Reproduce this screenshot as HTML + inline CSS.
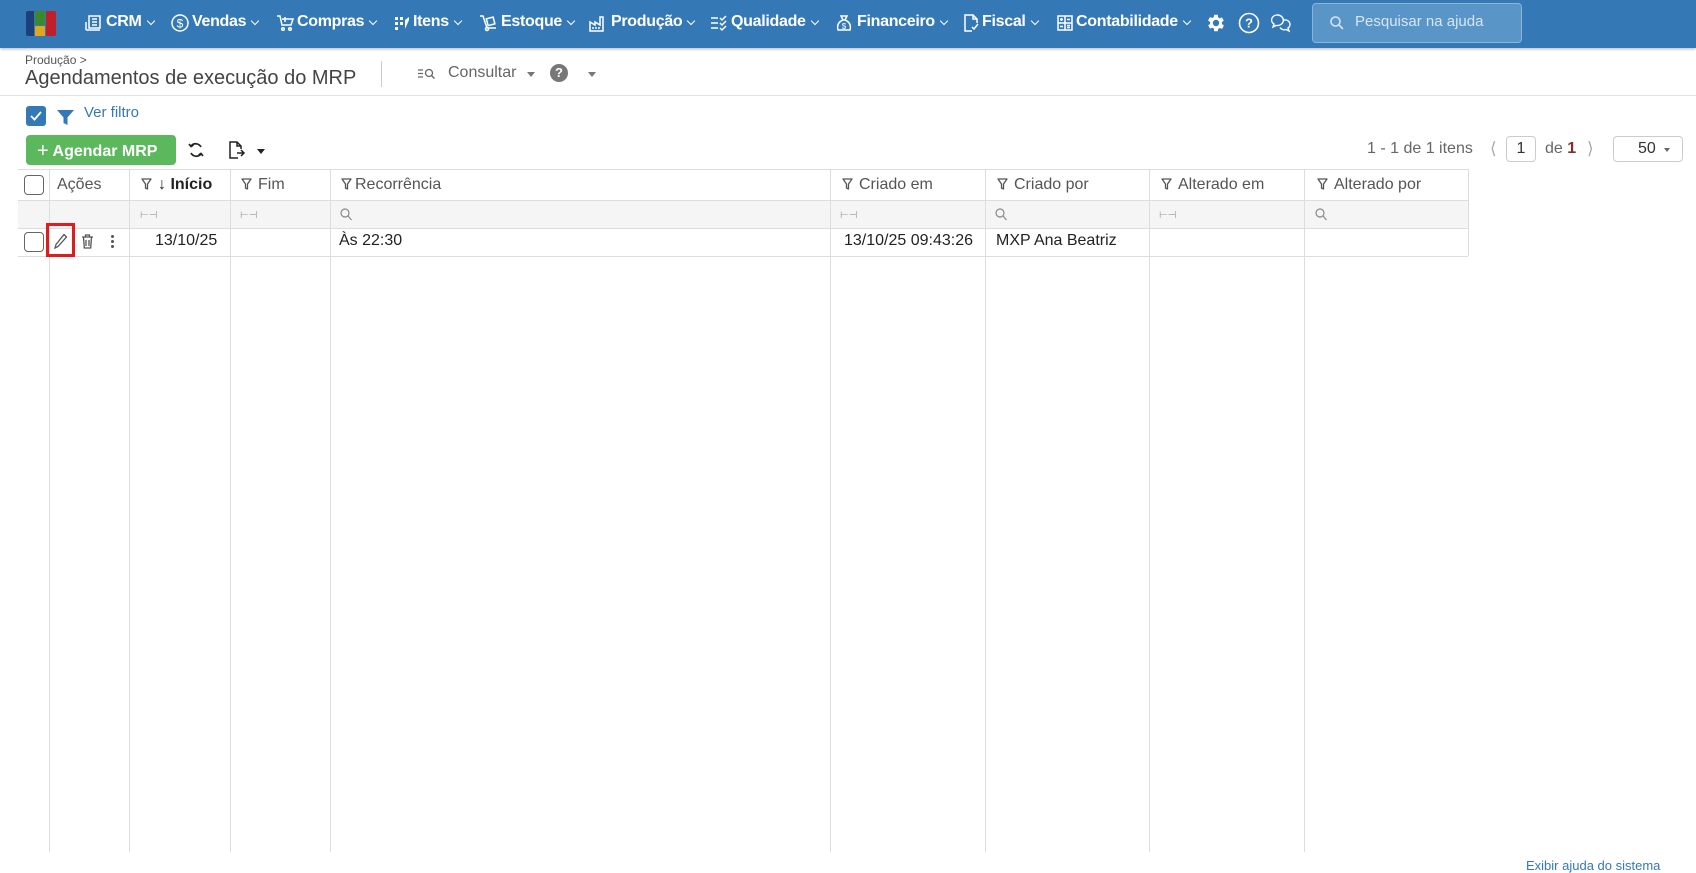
<!DOCTYPE html>
<html><head><meta charset="utf-8"><style>
*{box-sizing:border-box;margin:0;padding:0}
body{width:1696px;height:865px;overflow:hidden;background:#fff;font-family:"Liberation Sans",sans-serif;position:relative;color:#333}
.a{position:absolute;white-space:nowrap}
#top{position:absolute;left:0;top:0;width:1696px;height:48px;background:#3479b6;box-shadow:0 1px 3px rgba(0,0,0,.3)}
.nav{position:absolute;top:13px;color:#fff;font-size:16px;font-weight:bold;letter-spacing:-.3px}
.ico{position:absolute;top:14px}
.chev{display:inline-block;width:6px;height:6px;border-right:1.5px solid #fff;border-bottom:1.5px solid #fff;transform:rotate(45deg);margin-left:6px;position:relative;top:-2px}
.th{position:absolute;top:176px;font-size:16px;color:#555}
.vl{position:absolute;top:169px;width:1px;height:683px;background:#ddd}
.hl{position:absolute;height:1px;background:#ddd}
.fi{position:absolute;top:210px;color:#999;font-size:10px}
.td{position:absolute;top:232px;font-size:16px;color:#222}
.filt{display:inline-block;width:11px;height:12px;margin-right:6px;position:relative;top:1px}
</style></head><body>
<svg width="0" height="0" style="position:absolute"><defs><symbol id="fu" viewBox="0 0 11 12"><path d="M1 1h9L6.5 6v5L4.5 10V6z" fill="none" stroke="#555" stroke-width="1.3" stroke-linejoin="round"/></symbol></defs></svg>
<div id="top">
 <div class="a" style="left:26px;top:11px;width:8px;height:25px;background:#1d3f7a;border-radius:2px 0 0 2px"></div>
 <div class="a" style="left:35px;top:11px;width:10px;height:14px;background:#3a8a2a"></div>
 <div class="a" style="left:35px;top:26px;width:10px;height:10px;background:#e0a61e"></div>
 <div class="a" style="left:46px;top:11px;width:10px;height:25px;background:#c0202a;border-radius:0 2px 2px 0"></div>
 <svg class="ico" style="left:84px" width="18" height="18" viewBox="0 0 18 18" fill="none" stroke="#fff" stroke-width="1.5"><rect x="5" y="2" width="11" height="12"/><path d="M2 16h14M2 8v8M8 5h5M8 8h5M8 11h5"/></svg>
 <div class="nav" style="left:106px">CRM<span class="chev"></span></div>
 <svg class="ico" style="left:171px" width="18" height="18" viewBox="0 0 18 18" fill="none" stroke="#fff" stroke-width="1.5"><circle cx="9" cy="9" r="8"/><text x="9" y="13.5" fill="#fff" stroke="none" font-size="12" text-anchor="middle" font-family="Liberation Sans">$</text></svg>
 <div class="nav" style="left:192px">Vendas<span class="chev"></span></div>
 <svg class="ico" style="left:276px" width="18" height="18" viewBox="0 0 18 18" fill="none" stroke="#fff" stroke-width="1.5"><path d="M1 2h3l2 9h9l2-6H6M9 3v5M7 5h4"/><circle cx="7" cy="15" r="1.3"/><circle cx="14" cy="15" r="1.3"/></svg>
 <div class="nav" style="left:297px">Compras<span class="chev"></span></div>
 <svg class="ico" style="left:393px" width="18" height="18" viewBox="0 0 18 18" fill="#fff"><rect x="2" y="3" width="3" height="3"/><rect x="7" y="3" width="3" height="3"/><rect x="2" y="8" width="3" height="3"/><rect x="7" y="8" width="3" height="3"/><rect x="2" y="13" width="3" height="3"/><path d="M12 6l4-3v3l-4 9z"/></svg>
 <div class="nav" style="left:413px">Itens<span class="chev"></span></div>
 <svg class="ico" style="left:479px" width="18" height="18" viewBox="0 0 18 18" fill="none" stroke="#fff" stroke-width="1.5"><path d="M1 2h3l4 12h9"/><rect x="8" y="4" width="7" height="7" transform="rotate(-15 11 7)"/><circle cx="8" cy="15" r="1.5"/></svg>
 <div class="nav" style="left:501px">Estoque<span class="chev"></span></div>
 <svg class="ico" style="left:589px" width="18" height="18" viewBox="0 0 18 18" fill="none" stroke="#fff" stroke-width="1.5"><path d="M1 17V8l5 3V8l5 3V3h3v14zM4 13v2M7 13v2M10 13v2"/></svg>
 <div class="nav" style="left:611px">Produção<span class="chev"></span></div>
 <svg class="ico" style="left:710px" width="18" height="18" viewBox="0 0 18 18" fill="none" stroke="#fff" stroke-width="1.5"><path d="M1 4h7M1 9h7M1 14h7M10 4l2 2 4-4M10 9l2 2 4-4M10 14l2 2 4-4"/></svg>
 <div class="nav" style="left:731px">Qualidade<span class="chev"></span></div>
 <svg class="ico" style="left:835px" width="18" height="18" viewBox="0 0 18 18" fill="none" stroke="#fff" stroke-width="1.5"><path d="M6 2h6l-2 4h-2zM8 6C3 8 2 12 3 16h12c1-4 0-8-5-10"/><text x="9" y="15" fill="#fff" stroke="none" font-size="8" text-anchor="middle">$</text></svg>
 <div class="nav" style="left:857px">Financeiro<span class="chev"></span></div>
 <svg class="ico" style="left:962px" width="18" height="18" viewBox="0 0 18 18" fill="none" stroke="#fff" stroke-width="1.5"><path d="M10 17H3V1h8l4 4v4M11 1v4h4M10 13l2 2 4-5"/></svg>
 <div class="nav" style="left:982px">Fiscal<span class="chev"></span></div>
 <svg class="ico" style="left:1056px" width="18" height="18" viewBox="0 0 18 18" fill="none" stroke="#fff" stroke-width="1.5"><rect x="2" y="2" width="14" height="14"/><path d="M9 2v14M2 9h14M4 5.5h3M5.5 4v3M11 5.5h3M4 12.5h3M11 11.5h3M11 13.5h3"/></svg>
 <div class="nav" style="left:1076px">Contabilidade<span class="chev"></span></div>
 <svg class="ico" style="left:1205px;top:12px" width="22" height="22" viewBox="0 0 24 24" fill="#fff"><path d="M19.4 13a7.5 7.5 0 000-2l2.1-1.6-2-3.5-2.5 1a7 7 0 00-1.7-1L15 3h-4l-.4 2.6a7 7 0 00-1.7 1l-2.5-1-2 3.5L6.6 11a7.5 7.5 0 000 2l-2.1 1.6 2 3.5 2.5-1a7 7 0 001.7 1L11 21h4l.4-2.6a7 7 0 001.7-1l2.5 1 2-3.5zM13 15.5a3.5 3.5 0 110-7 3.5 3.5 0 010 7z" transform="translate(-1 0)"/></svg>
 <svg class="ico" style="left:1238px;top:12px" width="22" height="22" viewBox="0 0 22 22" fill="none" stroke="#fff" stroke-width="1.6"><circle cx="11" cy="11" r="9.5"/><text x="11" y="15.5" fill="#fff" stroke="none" font-size="13" font-weight="bold" text-anchor="middle" font-family="Liberation Sans">?</text></svg>
 <svg class="ico" style="left:1270px;top:13px" width="22" height="20" viewBox="0 0 22 20" fill="none" stroke="#fff" stroke-width="1.4"><path d="M8 2a6 5 0 00-4 9l-1 3 3-1.5A6 5 0 108 2z"/><path d="M14 7a5 4.5 0 014 8l1 3-3-1.5a5 4.5 0 01-6-2"/></svg>
 <div class="a" style="left:1312px;top:3px;width:210px;height:40px;background:#5a95c8;border:1px solid #8ab4da;border-radius:4px"></div>
 <svg class="a" style="left:1330px;top:16px" width="14" height="14" viewBox="0 0 14 14" fill="none" stroke="#d5e4f2" stroke-width="1.6"><circle cx="5.5" cy="5.5" r="4.5"/><path d="M9 9l4 4"/></svg>
 <div class="a" style="left:1355px;top:13px;font-size:15px;color:#d8e6f3">Pesquisar na ajuda</div>
</div>

<div class="a" style="left:25px;top:53px;font-size:12px;color:#555">Produção &gt;</div>
<div class="a" style="left:25px;top:67px;font-size:20px;color:#444">Agendamentos de execução do MRP</div>
<div class="a" style="left:381px;top:61px;width:1px;height:26px;background:#ccc"></div>
<svg class="a" style="left:418px;top:67px" width="18" height="13" viewBox="0 0 18 13" fill="none" stroke="#666" stroke-width="1.3"><path d="M0 3h5M0 6.5h5M0 10h5"/><circle cx="11" cy="6" r="3.5"/><path d="M13.5 8.5l3 3"/></svg>
<div class="a" style="left:448px;top:64px;font-size:16px;color:#666">Consultar</div>
<div class="a" style="left:527px;top:72px;border-left:4px solid transparent;border-right:4px solid transparent;border-top:5px solid #777"></div>
<div class="a" style="left:550px;top:64px;width:18px;height:18px;border-radius:50%;background:#777;color:#fff;font-size:13px;font-weight:bold;text-align:center;line-height:18px">?</div>
<div class="a" style="left:588px;top:72px;border-left:4px solid transparent;border-right:4px solid transparent;border-top:5px solid #777"></div>
<div class="a" style="left:0;top:95px;width:1696px;height:1px;background:#e3e3e3"></div>

<div class="a" style="left:26px;top:106px;width:20px;height:20px;background:#3479b6;border-radius:3px"></div>
<svg class="a" style="left:29px;top:109px" width="14" height="14" viewBox="0 0 14 14" fill="none" stroke="#fff" stroke-width="1.8"><path d="M2 7l3.5 3.5L12 3"/></svg>
<svg class="a" style="left:57px;top:109px" width="17" height="17" viewBox="0 0 17 17" fill="#3479b6"><path d="M0 1h17l-6.5 7.5V16l-4-2V8.5z"/></svg>
<div class="a" style="left:84px;top:104px;font-size:15px;color:#3479b6">Ver filtro</div>

<div class="a" style="left:26px;top:135px;width:150px;height:30px;background:#5cb85c;border-radius:4px;color:#fff;font-size:16px;font-weight:bold;line-height:30px;padding-left:11px"><span style="font-size:20px;font-weight:normal;position:relative;top:1px">+</span> Agendar MRP</div>
<svg class="a" style="left:187px;top:141px" width="18" height="18" viewBox="0 0 18 18" fill="none" stroke="#222" stroke-width="1.7"><path d="M14 6A6 6 0 004 5M4 12a6 6 0 0010 1"/><path d="M2 3l2 2.5L6.5 4M16 15l-2-2.5-2.5 1.5" /></svg>
<svg class="a" style="left:228px;top:141px" width="18" height="19" viewBox="0 0 18 19" fill="none" stroke="#222" stroke-width="1.5"><path d="M10 17H2V1h7l4 4v3M9 1v4h4M9 12h7M13 9l3 3-3 3"/></svg>
<div class="a" style="left:257px;top:149px;border-left:4px solid transparent;border-right:4px solid transparent;border-top:5px solid #222"></div>

<div class="a" style="left:1367px;top:140px;font-size:16px;color:#666">1 - 1 de 1 itens</div>
<div class="a" style="left:1490px;top:139px;font-size:17px;color:#aaa">&#10216;</div>
<div class="a" style="left:1506px;top:136px;width:30px;height:26px;border:1px solid #ccc;border-radius:4px;text-align:center;line-height:24px;font-size:16px;color:#333">1</div>
<div class="a" style="left:1545px;top:140px;font-size:16px;color:#666">de <b style="color:#8a2a2a;font-weight:bold">1</b></div>
<div class="a" style="left:1587px;top:139px;font-size:17px;color:#aaa">&#10217;</div>
<div class="a" style="left:1613px;top:136px;width:70px;height:26px;border:1px solid #ccc;border-radius:4px;font-size:16px;color:#333;line-height:24px;padding-left:24px">50</div>
<div class="a" style="left:1664px;top:148px;border-left:3.5px solid transparent;border-right:3.5px solid transparent;border-top:4px solid #666"></div>

<!-- table -->
<div class="hl" style="left:18px;top:169px;width:1450px"></div>
<div class="a" style="left:18px;top:200px;width:1450px;height:28px;background:#f5f5f5"></div>
<div class="hl" style="left:18px;top:200px;width:1450px"></div>
<div class="hl" style="left:18px;top:228px;width:1450px"></div>
<div class="hl" style="left:18px;top:256px;width:1450px"></div>
<div class="vl" style="left:49px"></div><div class="vl" style="left:129px"></div>
<div class="vl" style="left:230px"></div><div class="vl" style="left:330px"></div><div class="vl" style="left:830px"></div>
<div class="vl" style="left:985px"></div><div class="vl" style="left:1149px"></div><div class="vl" style="left:1304px"></div><div class="vl" style="left:1468px;height:87px"></div>

<div class="a" style="left:24px;top:175px;width:20px;height:20px;border:1.5px solid #666;border-radius:4px"></div>
<div class="th" style="left:57px">Ações</div>
<div class="th" style="left:141px;color:#222"><svg class="filt"><use href="#fu"/></svg>↓ <b>Início</b></div>
<div class="th" style="left:241px"><svg class="filt"><use href="#fu"/></svg>Fim</div>
<div class="th" style="left:341px"><svg class="filt" style="margin-right:3px"><use href="#fu"/></svg>Recorrência</div>
<div class="th" style="left:842px"><svg class="filt"><use href="#fu"/></svg>Criado em</div>
<div class="th" style="left:997px"><svg class="filt"><use href="#fu"/></svg>Criado por</div>
<div class="th" style="left:1161px"><svg class="filt"><use href="#fu"/></svg>Alterado em</div>
<div class="th" style="left:1317px"><svg class="filt"><use href="#fu"/></svg>Alterado por</div>

<div class="fi" style="left:140px">⊢⊣</div><div class="fi" style="left:240px">⊢⊣</div>
<svg class="a" style="left:340px;top:208px" width="12" height="13" viewBox="0 0 12 13" fill="none" stroke="#888" stroke-width="1.2"><circle cx="5" cy="5" r="4"/><path d="M8 8l3.5 4"/></svg>
<div class="fi" style="left:840px">⊢⊣</div>
<svg class="a" style="left:995px;top:208px" width="12" height="13" viewBox="0 0 12 13" fill="none" stroke="#888" stroke-width="1.2"><circle cx="5" cy="5" r="4"/><path d="M8 8l3.5 4"/></svg>
<div class="fi" style="left:1159px">⊢⊣</div>
<svg class="a" style="left:1315px;top:208px" width="12" height="13" viewBox="0 0 12 13" fill="none" stroke="#888" stroke-width="1.2"><circle cx="5" cy="5" r="4"/><path d="M8 8l3.5 4"/></svg>

<div class="a" style="left:24px;top:232px;width:20px;height:20px;border:1.5px solid #666;border-radius:4px"></div>
<div class="a" style="left:46px;top:223px;width:29px;height:34px;border:3px solid #e21b1b"></div>
<svg class="a" style="left:54px;top:233px" width="14" height="16" viewBox="0 0 14 16" fill="none" stroke="#555" stroke-width="1.3"><path d="M10 1.5l2.5 2.5L4 13.5 1 15l1-3.5z"/></svg>
<svg class="a" style="left:81px;top:234px" width="13" height="15" viewBox="0 0 13 15" fill="none" stroke="#555" stroke-width="1.3"><path d="M1 3h11M4.5 3V1h4v2M2.5 3l.8 11h6.4l.8-11M5 6v6M8 6v6"/></svg>
<div class="a" style="left:111px;top:235px;width:3px;height:3px;background:#555;border-radius:50%;box-shadow:0 5px #555,0 10px #555"></div>
<div class="td" style="left:155px">13/10/25</div>
<div class="td" style="left:339px">Às 22:30</div>
<div class="td" style="left:844px">13/10/25 09:43:26</div>
<div class="td" style="left:996px">MXP Ana Beatriz</div>
<div class="a" style="left:1526px;top:858px;font-size:13px;color:#3479b6">Exibir ajuda do sistema</div>
</body></html>
